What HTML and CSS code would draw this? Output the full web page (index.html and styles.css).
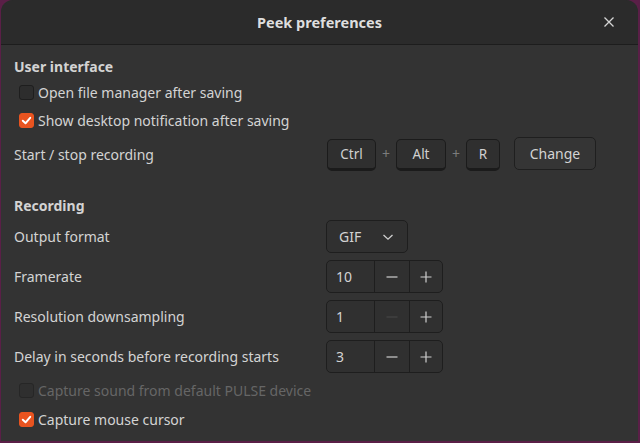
FILE: index.html
```html
<!DOCTYPE html>
<html>
<head>
<meta charset="utf-8">
<link rel="stylesheet" href="styles.css">
</head>
<body>
<div class="window">
  <header class="titlebar">
    <span class="title">Peek preferences</span>
    <span class="close"><svg width="12" height="12" viewBox="0 0 12 12"><path d="M1.5 1.5 L10.5 10.5 M10.5 1.5 L1.5 10.5" stroke="#d6d6d6" stroke-width="1.3" fill="none"/></svg></span>
  </header>
  <main class="content">
    <div class="heading h1">User interface</div>
    <label class="check row-cb1"><span class="box"></span><span>Open file manager after saving</span></label>
    <label class="check row-cb2"><span class="box on"><svg width="13" height="13" viewBox="0 0 13 13"><path d="M2.8 6.8 L5.5 9.3 L10.2 3.8" stroke="#fff" stroke-width="2" fill="none" stroke-linecap="round" stroke-linejoin="round"/></svg></span><span>Show desktop notification after saving</span></label>
    <div class="row row-keys">
      <span class="label">Start / stop recording</span>
      <div class="keys">
        <span class="key k-ctrl">Ctrl</span><span class="plus">+</span><span class="key k-alt">Alt</span><span class="plus">+</span><span class="key k-r">R</span>
        <span class="btn">Change</span>
      </div>
    </div>
    <div class="heading h2">Recording</div>
    <div class="row row-ctl first">
      <span class="label">Output format</span>
      <span class="combo"><span>GIF</span><svg width="12" height="8" viewBox="0 0 12 8"><path d="M1.5 2 L6 6.2 L10.5 2" stroke="#cfcfcf" stroke-width="1.3" fill="none"/></svg></span>
    </div>
    <div class="row row-ctl">
      <span class="label">Framerate</span>
      <span class="spin"><span class="val">10</span><span class="sb"><svg width="12" height="12" viewBox="0 0 12 12"><path d="M0.5 6 H11.5" stroke="currentColor" stroke-width="1.2"/></svg></span><span class="sb"><svg width="12" height="12" viewBox="0 0 12 12"><path d="M0.5 6 H11.5 M6 0.5 V11.5" stroke="currentColor" stroke-width="1.2"/></svg></span></span>
    </div>
    <div class="row row-ctl">
      <span class="label">Resolution downsampling</span>
      <span class="spin"><span class="val">1</span><span class="sb dis"><svg width="12" height="12" viewBox="0 0 12 12"><path d="M0.5 6 H11.5" stroke="currentColor" stroke-width="1.2"/></svg></span><span class="sb"><svg width="12" height="12" viewBox="0 0 12 12"><path d="M0.5 6 H11.5 M6 0.5 V11.5" stroke="currentColor" stroke-width="1.2"/></svg></span></span>
    </div>
    <div class="row row-ctl">
      <span class="label">Delay in seconds before recording starts</span>
      <span class="spin"><span class="val">3</span><span class="sb"><svg width="12" height="12" viewBox="0 0 12 12"><path d="M0.5 6 H11.5" stroke="currentColor" stroke-width="1.2"/></svg></span><span class="sb"><svg width="12" height="12" viewBox="0 0 12 12"><path d="M0.5 6 H11.5 M6 0.5 V11.5" stroke="currentColor" stroke-width="1.2"/></svg></span></span>
    </div>
    <label class="check row-cb3 disabled"><span class="box"></span><span>Capture sound from default PULSE device</span></label>
    <label class="check row-cb4"><span class="box on"><svg width="13" height="13" viewBox="0 0 13 13"><path d="M2.8 6.8 L5.5 9.3 L10.2 3.8" stroke="#fff" stroke-width="2" fill="none" stroke-linecap="round" stroke-linejoin="round"/></svg></span><span>Capture mouse cursor</span></label>
  </main>
</div>
</body>
</html>
```
FILE: styles.css
```css
html, body {
  margin: 0;
  padding: 0;
  width: 640px;
  height: 443px;
  overflow: hidden;
  background: #5a1f47;
}
body {
  font-family: "Noto Sans", "Liberation Sans", sans-serif;
  font-size: 14px;
  color: #d3d3d3;
}
.window {
  margin: 0 2px 0 1px;
  height: 441px;
  border-radius: 12px 12px 0 0;
  background: #333333;
  overflow: hidden;
  display: flex;
  flex-direction: column;
}
.titlebar {
  height: 44px;
  flex: none;
  background: #2b2b2b;
  border-bottom: 1px solid #1d1d1d;
  display: flex;
  align-items: center;
  justify-content: center;
  position: relative;
}
.title {
  font-weight: bold;
  font-size: 14.5px;
  color: #dedede;
}
.close {
  position: absolute;
  left: 602px;
  top: 16px;
  width: 12px;
  height: 12px;
  display: flex;
}
.content {
  padding: 10px 0 0 13px;
  display: flex;
  flex-direction: column;
}
.heading {
  height: 24px;
  line-height: 24px;
  font-weight: bold;
}
.h2 { margin-top: 23px; }
.check {
  display: flex;
  align-items: center;
  gap: 4px;
  padding-left: 5px;
  height: 26px;
}
.row-cb2 { height: 30px; }
.row-cb3 { margin-top: 5px; height: 24px; }
.row-cb4 { margin-top: 5px; height: 24px; }
.disabled { color: #666666; }
.box {
  width: 13px;
  height: 13px;
  border: 1px solid #1e1e1e;
  border-radius: 3px;
  background: #2d2d2d;
  display: flex;
  align-items: center;
  justify-content: center;
  flex: none;
}
.disabled .box { background: #2f2f2f; border-color: #262626; }
.box.on {
  background: #e95420;
  border-color: #e95420;
}
.row {
  display: grid;
  grid-template-columns: 312px auto;
  align-items: center;
}
.row-keys { margin-top: 2px; height: 34px; }
.row-ctl { margin-top: 7px; height: 33px; }
.row-ctl.first { margin-top: 2px; }
.keys {
  display: flex;
  align-items: flex-start;
  height: 34px;
  padding-left: 1px;
}
.key {
  box-sizing: border-box;
  margin-top: 2px;
  height: 32px;
  border: 1px solid #1b1b1b;
  border-bottom-width: 3px;
  border-radius: 5px;
  background: #2f2f2f;
  display: flex;
  align-items: center;
  justify-content: center;
  color: #d0d0d0;
  font-size: 13.5px;
}
.k-ctrl { width: 49px; }
.k-alt { width: 50px; }
.k-r { width: 34px; }
.plus {
  width: 20px;
  text-align: center;
  line-height: 34px;
  color: #7c7c7c;
}
.btn {
  box-sizing: border-box;
  margin-left: 14px;
  width: 82px;
  height: 33px;
  border: 1px solid #1f1f1f;
  border-radius: 5px;
  background: #353535;
  display: flex;
  align-items: center;
  justify-content: center;
}
.combo {
  box-sizing: border-box;
  width: 82px;
  height: 33px;
  border: 1px solid #1e1e1e;
  border-radius: 5px;
  background: #303030;
  display: flex;
  align-items: center;
  justify-content: space-between;
  padding: 0 13px 0 12px;
}
.spin {
  box-sizing: border-box;
  width: 117px;
  height: 33px;
  border: 1px solid #1e1e1e;
  border-radius: 5px;
  background: #303030;
  display: grid;
  grid-template-columns: 47px 35px 1fr;
}
.val {
  display: flex;
  align-items: center;
  padding-left: 9px;
}
.sb {
  border-left: 1px solid #1e1e1e;
  display: flex;
  align-items: center;
  justify-content: center;
  color: #cfcfcf;
}
.sb.dis { color: #464646; }
```
